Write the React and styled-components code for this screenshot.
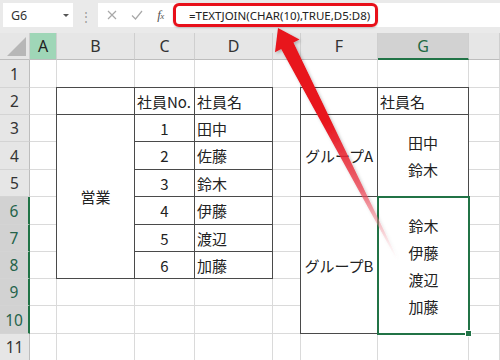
import React from "react";
import styled, { createGlobalStyle, css } from "styled-components";

const Global = createGlobalStyle`
  html, body { margin: 0; padding: 0; background: #ffffff; }
  body { width: 500px; height: 360px; overflow: hidden; }
  #root { width: 500px; height: 360px; }
`;

const Page = styled.div`
  position: relative;
  width: 500px;
  height: 360px;
  display: flex;
  flex-direction: column;
  background: #e8e8e8;
  font-family: "Noto Sans CJK JP", "Noto Sans", sans-serif;
  overflow: hidden;
`;

const Bar = styled.div`
  height: 33px;
  flex: none;
  display: flex;
  align-items: flex-start;
  padding-top: 3px;
  box-sizing: border-box;
  background: #eaeaea;
`;

const NameBox = styled.div`
  margin-left: 3px;
  width: 70px;
  height: 24px;
  background: #ffffff;
  display: flex;
  align-items: center;
  justify-content: space-between;
  padding: 0 4px 0 8px;
  box-sizing: border-box;
  font-family: "Noto Sans", sans-serif;
  font-size: 12.5px;
  color: #333;
`;

const Caret = styled.span`
  width: 0;
  height: 0;
  border-left: 3px solid transparent;
  border-right: 3px solid transparent;
  border-top: 3px solid #555;
`;

const Grip = styled.div`
  width: 25px;
  height: 24px;
  display: flex;
  align-items: center;
  justify-content: center;
  color: #9a9a9a;
  font-size: 12px;
`;

const FormulaArea = styled.div`
  flex: 1;
  height: 24px;
  background: #ffffff;
  display: flex;
  align-items: center;
`;

const Tool = styled.div`
  width: ${(p) => p.$w}px;
  height: 24px;
  display: flex;
  align-items: center;
  justify-content: center;
  flex: none;
`;

const Fx = styled.span`
  font-family: "Liberation Serif", serif;
  font-style: italic;
  font-size: 13px;
  color: #555;
  letter-spacing: -0.5px;
  & small { font-size: 9px; }
`;

const Highlight = styled.div`
  margin-left: 0;
  width: 205px;
  height: 24px;
  box-sizing: border-box;
  border: 3px solid #e8101a;
  border-radius: 6px;
  display: flex;
  align-items: center;
  padding-left: 13px;
  font-family: "Noto Sans", sans-serif;
  font-size: 11.5px;
  color: #222;
  white-space: nowrap;
  box-shadow: 0 1px 2px rgba(0, 0, 0, 0.2);
`;

const Sheet = styled.div`
  flex: none;
  display: grid;
  grid-template-columns: 30px 27px 78px 60px 78px 28px 77px 91px 31px;
  grid-template-rows: 27px 28px 27px 27px 28px 27px 28px 27px 27px 27px 28px 27px;
  background: #ffffff;
`;

const Corner = styled.div`
  grid-column: 1;
  grid-row: 1;
  background: #e6e6e6;
  border-right: 1px solid #cfcfcf;
  border-bottom: 1px solid #bdbdbd;
  position: relative;
  &::after {
    content: "";
    position: absolute;
    right: 3px;
    bottom: 3px;
    width: 0;
    height: 0;
    border-left: 19px solid transparent;
    border-bottom: 19px solid #b7b7b7;
  }
`;

const ColHead = styled.div`
  grid-column: ${(p) => p.$col};
  grid-row: 1;
  display: flex;
  align-items: center;
  justify-content: center;
  box-sizing: border-box;
  font-family: "Noto Sans", sans-serif;
  font-size: 16px;
  color: #333;
  background: #e6e6e6;
  border-right: 1px solid #cfcfcf;
  border-bottom: 1px solid #bdbdbd;
  ${(p) =>
    p.$state === "green" &&
    css`
      background: #9fd6b7;
      color: #222;
    `}
  ${(p) =>
    p.$state === "sel" &&
    css`
      background: #d2d2d2;
      color: #1f6a43;
      border-bottom: 2px solid #217346;
    `}
`;

const RowHead = styled.div`
  grid-column: 1;
  grid-row: ${(p) => p.$row};
  display: flex;
  align-items: center;
  justify-content: center;
  box-sizing: border-box;
  font-family: "Noto Sans", sans-serif;
  font-size: 15.5px;
  color: #333;
  background: #e6e6e6;
  border-bottom: 1px solid #d4d4d4;
  border-right: 1px solid #bdbdbd;
  ${(p) =>
    p.$sel &&
    css`
      background: #d2d2d2;
      color: #24634a;
      border-right: 2px solid #217346;
    `}
`;

const Cell = styled.div`
  grid-column: ${(p) => p.$col};
  grid-row: ${(p) => p.$row} / span ${(p) => p.$span};
  display: flex;
  flex-direction: column;
  justify-content: center;
  align-items: ${(p) => (p.$align === "center" ? "center" : "flex-start")};
  padding: 0 ${(p) => (p.$align === "center" ? 0 : 2)}px;
  box-sizing: border-box;
  font-size: 15px;
  color: #222;
  white-space: nowrap;
  line-height: 27px;
  border-right: 1px solid #dadada;
  border-bottom: 1px solid #dadada;
  position: relative;
  ${(p) =>
    p.$table &&
    css`
      z-index: 1;
      border-right-color: #4a4a4a;
      border-bottom-color: #4a4a4a;
    `}
  ${(p) =>
    p.$left &&
    css`
      border-left: 1px solid #4a4a4a;
      margin-left: -1px;
    `}
  ${(p) =>
    p.$top &&
    css`
      border-top: 1px solid #4a4a4a;
      margin-top: -1px;
    `}
  ${(p) =>
    p.$selected &&
    css`
      z-index: 2;
      border: 2px solid #217346;
      margin: -1px -1px -1px -1px;
      &::after {
        content: "";
        position: absolute;
        right: -4px;
        bottom: -4px;
        width: 5px;
        height: 5px;
        background: #217346;
        border: 1px solid #ffffff;
      }
    `}
`;

const Line = styled.span`
  display: block;
  height: 27px;
`;

const Overlay = styled.svg`
  position: absolute;
  left: 0;
  top: 0;
  width: 500px;
  height: 360px;
  pointer-events: none;
  z-index: 5;
`;

const COLS = ["A", "B", "C", "D", "E", "F", "G", "H"];
const ROWS = [1, 2, 3, 4, 5, 6, 7, 8, 9, 10, 11];

const CONTENT = {
  C2: { t: "社員No.", a: "left" },
  D2: { t: "社員名", a: "left" },
  B3: { t: "営業", a: "center", span: 6 },
  C3: { t: "1", a: "center" },
  C4: { t: "2", a: "center" },
  C5: { t: "3", a: "center" },
  C6: { t: "4", a: "center" },
  C7: { t: "5", a: "center" },
  C8: { t: "6", a: "center" },
  D3: { t: "田中", a: "left" },
  D4: { t: "佐藤", a: "left" },
  D5: { t: "鈴木", a: "left" },
  D6: { t: "伊藤", a: "left" },
  D7: { t: "渡辺", a: "left" },
  D8: { t: "加藤", a: "left" },
  G2: { t: "社員名", a: "left" },
  F3: { t: "グループA", a: "center", span: 3 },
  G3: { lines: ["田中", "鈴木"], a: "center", span: 3 },
  F6: { t: "グループB", a: "center", span: 5 },
  G6: { lines: ["鈴木", "伊藤", "渡辺", "加藤"], a: "center", span: 5, sel: true },
};

const covered = new Set();
Object.entries(CONTENT).forEach(([k, v]) => {
  if (v.span) {
    const c = k[0];
    const r = parseInt(k.slice(1), 10);
    for (let i = 1; i < v.span; i++) covered.add(c + (r + i));
  }
});

function inTable(c, r) {
  if ("BCD".includes(c) && r >= 2 && r <= 8) return "B";
  if ("FG".includes(c) && r >= 2 && r <= 10) return "F";
  return null;
}

function Cells() {
  const out = [];
  ROWS.forEach((r) => {
    COLS.forEach((c, ci) => {
      const key = c + r;
      if (covered.has(key)) return;
      const v = CONTENT[key] || {};
      const t = inTable(c, r);
      out.push(
        <Cell
          key={key}
          $col={ci + 2}
          $row={r + 1}
          $span={v.span || 1}
          $align={v.a || "left"}
          $table={!!t}
          $left={t === c}
          $top={!!t && r === 2}
          $selected={!!v.sel}
        >
          {v.lines ? v.lines.map((l) => <Line key={l}>{l}</Line>) : v.t}
        </Cell>
      );
    });
  });
  return out;
}

function Arrow() {
  return (
    <Overlay viewBox="0 0 500 360">
      <defs>
        <linearGradient id="ag" gradientUnits="userSpaceOnUse" x1="278" y1="28" x2="397" y2="259">
          <stop offset="0" stopColor="#e8121b" stopOpacity="1" />
          <stop offset="0.4" stopColor="#e8121b" stopOpacity="1" />
          <stop offset="0.7" stopColor="#ec4050" stopOpacity="0.75" />
          <stop offset="0.88" stopColor="#f48a96" stopOpacity="0.35" />
          <stop offset="1" stopColor="#f8c0c8" stopOpacity="0" />
        </linearGradient>
        <filter id="sh" x="-20%" y="-20%" width="140%" height="140%">
          <feDropShadow dx="1.5" dy="1.5" stdDeviation="1.5" floodColor="#000" floodOpacity="0.25" />
        </filter>
      </defs>
      <polygon
        filter="url(#sh)"
        fill="url(#ag)"
        points="278,28 299.5,39.5 293.4,42.6 397.6,258.8 396.4,259.2 281.2,48.9 275,52.3"
      />
    </Overlay>
  );
}

export default function App() {
  return (
    <>
      <Global />
      <Page>
        <Bar>
          <NameBox>
            G6
            <Caret />
          </NameBox>
          <Grip>⋮</Grip>
          <FormulaArea>
            <Tool $w={28}>
              <svg width="10" height="10" viewBox="0 0 10 10">
                <path d="M1 1 L9 9 M9 1 L1 9" stroke="#a8a8a8" strokeWidth="1.2" fill="none" />
              </svg>
            </Tool>
            <Tool $w={22}>
              <svg width="12" height="10" viewBox="0 0 12 10">
                <path d="M1 5.5 L4.5 9 L11 1" stroke="#a8a8a8" strokeWidth="1.2" fill="none" />
              </svg>
            </Tool>
            <Tool $w={25}>
              <Fx>
                f<small>x</small>
              </Fx>
            </Tool>
            <Highlight>=TEXTJOIN(CHAR(10),TRUE,D5:D8)</Highlight>
          </FormulaArea>
        </Bar>
        <Sheet>
          <Corner />
          {COLS.map((c, i) => (
            <ColHead key={c} $col={i + 2} $state={c === "A" ? "green" : c === "G" ? "sel" : ""}>
              {c === "H" ? "" : c}
            </ColHead>
          ))}
          {ROWS.map((r) => (
            <RowHead key={r} $row={r + 1} $sel={r >= 6 && r <= 10}>
              {r}
            </RowHead>
          ))}
          <Cells />
        </Sheet>
        <Arrow />
      </Page>
    </>
  );
}
